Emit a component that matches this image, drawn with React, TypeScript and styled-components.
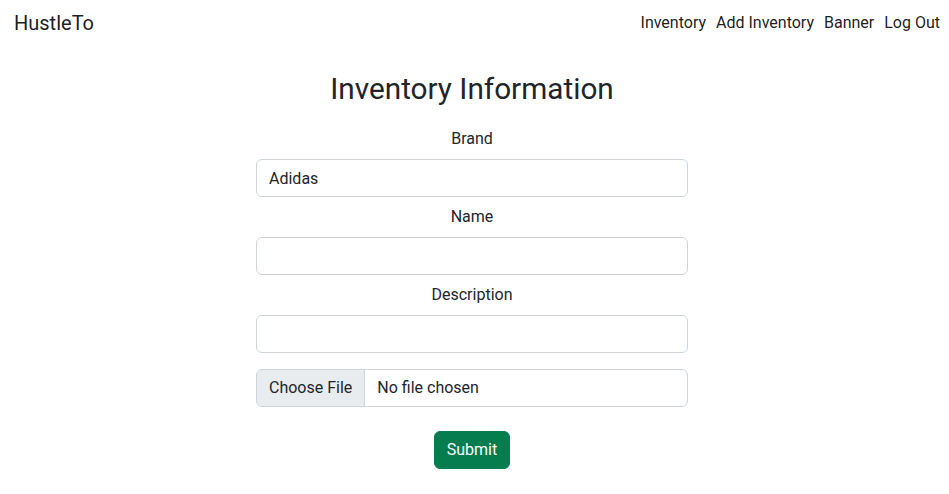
import React from 'react';
import styled, { createGlobalStyle } from 'styled-components';

const GlobalStyle = createGlobalStyle`
  * { box-sizing: border-box; }
  body {
    margin: 0;
    background: #fff;
    color: #212529;
    font-family: Roboto, "Liberation Sans", Arial, sans-serif;
    font-size: 16px;
    line-height: 1.5;
  }
`;

const Navbar = styled.nav`
  display: flex;
  align-items: center;
  justify-content: space-between;
  height: 44px;
  padding: 2px 9px 0 14px;
`;

const Brand = styled.a`
  font-size: 20px;
  color: rgba(0, 0, 0, 0.9);
  text-decoration: none;
`;

const NavLinks = styled.div`
  display: flex;
  gap: 10px;
`;

const NavLink = styled.a`
  color: rgba(0, 0, 0, 0.9);
  text-decoration: none;
`;

const Main = styled.main`
  display: flex;
  flex-direction: column;
  align-items: center;
  padding: 27px 5px 0 0;
`;

const Title = styled.h2`
  margin: 0 0 20.7px;
  font-size: calc(1.325rem + 0.9vw);
  font-weight: 400;
  line-height: 1.2;
`;

const Form = styled.form`
  width: 432px;
  display: flex;
  flex-direction: column;
`;

const Field = styled.div<{ $gap?: number }>`
  display: flex;
  flex-direction: column;
  align-items: center;
  margin-bottom: ${(p) => p.$gap ?? 8}px;
`;

const Label = styled.label`
  margin-bottom: 8px;
`;

const Input = styled.input`
  width: 100%;
  height: 38px;
  padding: 6px 12px;
  font: inherit;
  color: #212529;
  border: 1px solid #ced4da;
  border-radius: 6px;
  background: #fff;
`;

const FileBox = styled.label`
  display: flex;
  width: 100%;
  height: 38px;
  border: 1px solid #ced4da;
  border-radius: 6px;
  overflow: hidden;
`;

const FileButton = styled.span`
  display: flex;
  align-items: center;
  padding: 0 12px;
  background: #e9ecef;
  border-right: 1px solid #ced4da;
`;

const FileText = styled.span`
  display: flex;
  align-items: center;
  padding: 0 12px;
`;

const SubmitButton = styled.button`
  align-self: center;
  height: 38px;
  padding: 0 12px;
  font: inherit;
  color: #fff;
  background: #067d4f;
  border: 1px solid #067d4f;
  border-radius: 6px;
`;

const App = () => (
  <>
    <GlobalStyle />
    <Navbar>
      <Brand href="#">HustleTo</Brand>
      <NavLinks>
        <NavLink href="#">Inventory</NavLink>
        <NavLink href="#">Add Inventory</NavLink>
        <NavLink href="#">Banner</NavLink>
        <NavLink href="#">Log Out</NavLink>
      </NavLinks>
    </Navbar>
    <Main>
      <Title>Inventory Information</Title>
      <Form onSubmit={(e) => e.preventDefault()}>
        <Field>
          <Label htmlFor="brand">Brand</Label>
          <Input id="brand" defaultValue="Adidas" />
        </Field>
        <Field>
          <Label htmlFor="name">Name</Label>
          <Input id="name" />
        </Field>
        <Field $gap={16}>
          <Label htmlFor="description">Description</Label>
          <Input id="description" />
        </Field>
        <Field $gap={24}>
          <FileBox>
            <FileButton>Choose File</FileButton>
            <FileText>No file chosen</FileText>
          </FileBox>
        </Field>
        <SubmitButton type="submit">Submit</SubmitButton>
      </Form>
    </Main>
  </>
);

export default App;
